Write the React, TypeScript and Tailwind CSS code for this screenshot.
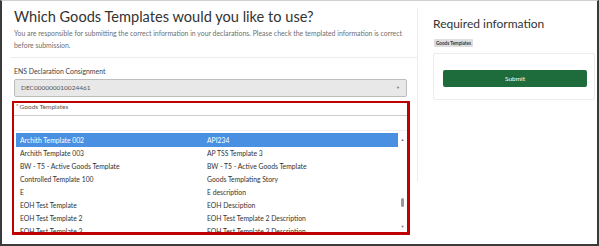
import React from "react";

const rows: [string, string][] = [
  ["Archith Template 002", "API234"],
  ["Archith Template 003", "AP TSS Template 3"],
  ["BW - T5 - Active Goods Template", "BW - T5 - Active Goods Template"],
  ["Controlled Template 100", "Goods Templating Story"],
  ["E", "E description"],
  ["EOH Test Template", "EOH Desciption"],
  ["EOH Test Template 2", "EOH Test Template 2 Description"],
  ["EOH Test Template 3", "EOH Test Template 3 Description"],
];

export default function App() {
  return (
    <div
      className="w-[599px] h-[246px] bg-white border-l-2 border-r-2 border-b-2 border-t border-l-[#3a3a3a] border-r-[#3a3a3a] border-b-[#3a3a3a] border-t-[#cfcfcf] flex overflow-hidden"
      style={{ fontFamily: "Lato, 'Noto Sans', sans-serif" }}
    >
      {/* Left column */}
      <div className="w-[415px] pl-[12px] flex flex-col shrink-0">
        <div className="text-[14.6px] leading-[18px] text-[#333] mt-[7px] whitespace-nowrap">
          Which Goods Templates would you like to use?
        </div>
        <div className="text-[6.9px] leading-[12px] text-[#6f6f6f] mt-[1px] w-[395px]">
          You are responsible for submitting the correct information in your declarations. Please check the templated information is correct before submission.
        </div>
        <div className="h-px bg-[#ececec] mt-[6px] -ml-[4px] shrink-0" />
        <div className="text-[6.9px] leading-[10px] text-[#444] mt-[8px]">ENS Declaration Consignment</div>
        <div className="mt-[3px] w-[393px] h-[18px] shrink-0 bg-[#e8e8e8] border border-[#bdbdbd] rounded-[2px] flex items-center justify-between px-[6px]">
          <span className="text-[6.5px] text-[#555]">DEC000000010024461</span>
          <span className="text-[4px] text-[#777]">▼</span>
        </div>
        {/* Red highlight box */}
        <div className="mt-[4px] -ml-[2px] w-[398px] h-[134px] shrink-0 border-[2px] border-r-[3px] border-b-[3px] border-[#c00000] flex flex-col overflow-hidden">
          <div className="text-[6.5px] leading-[8px] text-[#555] pl-[2px] flex shrink-0">
            <span className="text-[#c00000] text-[6px] leading-[6px] mr-[1px]">*</span>
            <span>Goods Templates</span>
          </div>
          <div className="mt-[4px] h-[16px] shrink-0 border-t border-[#cccccc] border-b border-b-[#f0f0f0]" />
          <div className="flex flex-1 min-h-0 pt-[2px] pl-[2px]">
            <div className="flex-1 flex flex-col">
              {rows.map((r, i) => (
                <div
                  key={i}
                  className={
                    "flex text-[6.8px] shrink-0 " +
                    (i === 0
                      ? "h-[14px] leading-[14px] bg-[#4a90e2] text-white"
                      : "h-[13px] leading-[13px] text-[#333]")
                  }
                >
                  <span className="w-[191px] pl-[4px] shrink-0">{r[0]}</span>
                  <span>{r[1]}</span>
                </div>
              ))}
            </div>
            <div className="w-[9px] flex flex-col items-center pt-[4px] pb-[2px]">
              <span className="text-[4px] leading-[6px] text-[#777]">▲</span>
              <div className="flex-1 flex flex-col justify-end pb-[17px]">
                <div className="w-[3px] h-[9px] rounded-full bg-[#999]" />
              </div>
              <span className="text-[4px] leading-[6px] text-[#777]">▼</span>
            </div>
          </div>
        </div>
      </div>
      {/* Separator */}
      <div className="w-px bg-[#ececec] mt-[7px] h-[174px] self-start shrink-0" />
      {/* Right column */}
      <div className="flex-1 pl-[15px] pr-[2px] flex flex-col">
        <div className="text-[12px] leading-[16px] text-[#333] mt-[15px]">Required information</div>
        <div className="mt-[7px] self-start ml-[1px] bg-[#dedede] rounded-[1px] px-[2px] h-[8px] flex items-center text-[4.6px] font-bold text-[#333]">
          Goods Templates
        </div>
        <div className="mt-[6px] h-[47px] border border-[#ececec] rounded-[2px] pt-[16px] pl-[9px] pr-[7px]">
          <div className="h-[17px] bg-[#1e6b3c] rounded-[2px] flex items-center justify-center text-white text-[6.5px]">
            Submit
          </div>
        </div>
      </div>
    </div>
  );
}
